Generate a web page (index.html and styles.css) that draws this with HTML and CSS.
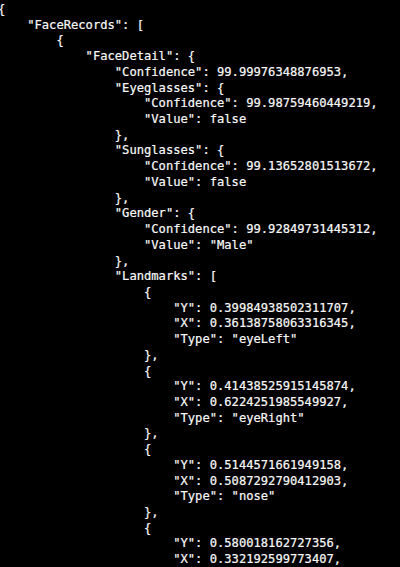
FILE: index.html
```html
<!DOCTYPE html>
<html lang="en">
<head>
<meta charset="utf-8">
<title>FaceRecords</title>
<link rel="stylesheet" href="styles.css">
</head>
<body>
<pre class="terminal">{
    "FaceRecords": [
        {
            "FaceDetail": {
                "Confidence": 99.99976348876953,
                "Eyeglasses": {
                    "Confidence": 99.98759460449219,
                    "Value": false
                },
                "Sunglasses": {
                    "Confidence": 99.13652801513672,
                    "Value": false
                },
                "Gender": {
                    "Confidence": 99.92849731445312,
                    "Value": "Male"
                },
                "Landmarks": [
                    {
                        "Y": 0.39984938502311707,
                        "X": 0.36138758063316345,
                        "Type": "eyeLeft"
                    },
                    {
                        "Y": 0.41438525915145874,
                        "X": 0.6224251985549927,
                        "Type": "eyeRight"
                    },
                    {
                        "Y": 0.5144571661949158,
                        "X": 0.5087292790412903,
                        "Type": "nose"
                    },
                    {
                        "Y": 0.580018162727356,
                        "X": 0.332192599773407,</pre>
</body>
</html>
```
FILE: styles.css
```css
html, body {
  margin: 0;
  padding: 0;
  background: #000;
  overflow: hidden;
}

.terminal {
  margin: 0 0 0 -2px;
  padding: 2px 0 0 0;
  font-family: "DejaVu Sans Mono", "Liberation Mono", monospace;
  font-size: 12.13px;
  line-height: 15.72px;
  color: #fafafa;
  -webkit-text-stroke: 0.2px #fafafa;
  white-space: pre;
}
```
